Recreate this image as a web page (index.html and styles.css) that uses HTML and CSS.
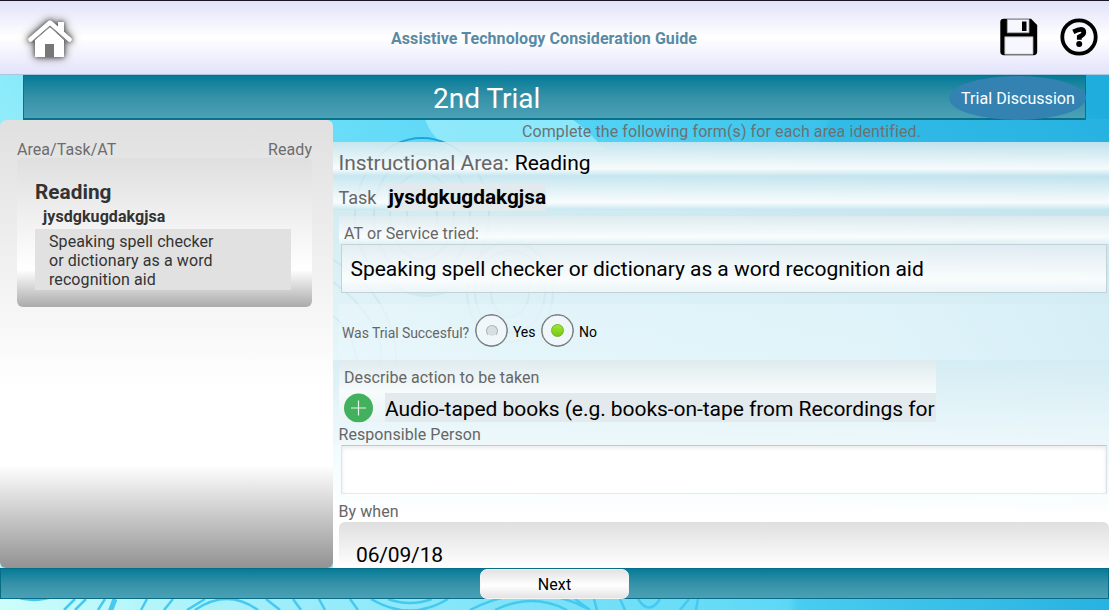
FILE: index.html
```html
<!DOCTYPE html>
<html lang="en">
<head>
<meta charset="utf-8">
<title>Assistive Technology Consideration Guide</title>
<link rel="stylesheet" href="styles.css">
</head>
<body>
<div class="app">
  <svg class="backdrop" viewBox="0 0 1109 610" aria-hidden="true">
    <defs>
      <linearGradient id="sky" x1="0" y1="0.6" x2="1" y2="0.2">
        <stop offset="0" stop-color="#a9f5fb"/><stop offset=".3" stop-color="#74e2fa"/>
        <stop offset=".62" stop-color="#4fd1f4"/><stop offset="1" stop-color="#1fadde"/>
      </linearGradient>
      <linearGradient id="floor" x1="0" x2="1">
        <stop offset="0" stop-color="#ccfdfa"/><stop offset=".3" stop-color="#96ebfa"/>
        <stop offset=".71" stop-color="#5cd8f6"/><stop offset=".72" stop-color="#48ccf0"/><stop offset="1" stop-color="#28b2e1"/>
      </linearGradient>
    </defs>
    <rect width="1109" height="610" fill="url(#sky)"/>
    <path d="M425 119 Q430 136 450 150H605Q590 132 572 119Z" fill="#9aecfb" opacity=".8"/>
    <path d="M830 119L815 150H1109V119Z" fill="#2db7e4" opacity=".55"/>
    <rect y="595" width="1109" height="15" fill="url(#floor)"/>
    <g class="ripples">
      <ellipse cx="422" cy="216" rx="67" ry="78"/>
      <ellipse cx="422" cy="216" rx="48" ry="62"/>
      <ellipse cx="422" cy="216" rx="32" ry="43"/>
      <ellipse cx="422" cy="216" rx="15" ry="25"/>
      <ellipse cx="510" cy="292" rx="43" ry="50"/>
      <ellipse cx="510" cy="292" rx="35" ry="41"/>
      <ellipse cx="510" cy="292" rx="19" ry="25"/>
      <path d="M333 260Q365 278 380 304Q400 335 396 380M333 282Q358 300 370 320Q390 350 375 390M333 316Q352 330 357 360M395 285Q420 304 450 290"/>
    </g>
    <g class="ripples low">
      <ellipse cx="33" cy="548" rx="52" ry="52"/>
      <path d="M75 599L64 610M86 599L75 610M105 599L98 610M147 599L141 610M173 599L164 610M195 610Q227 588 258 610M205 599L187 610M266 599L280 610M293 599L301 610M319 599L325 610M350 599L358 610M371 599Q410 622 448 599M388 599Q410 607 432 599M470 610Q532 578 590 610M495 610Q532 592 567 610M575 599L590 610M594 599L597 610M620 599L625 610M638 599Q649 616 660 599M680 610L689 599M696 610L698 599"/>
      <path d="M115 599L110 612" stroke-width="5"/>
    </g>
  </svg>

  <header class="topbar">
    <svg class="home" width="58" height="58" viewBox="0 0 58 58" role="img" aria-label="Home">
      <g fill="#fff">
        <path d="M37 14H43V24L37 20Z"/>
        <path d="M14 32L29 19L43 32V49H33V36H24V49H14Z"/>
        <path class="doorway" d="M24 36H33V49H24Z"/>
        <path d="M9.5 31.5L29 14.5L48.500 31.5" fill="none" stroke="#fff" stroke-width="4.500" stroke-linecap="round" stroke-linejoin="round"/>
        <path d="M13 32.500L29 18.500L45 32.500" fill="none" stroke="#999" stroke-width="1"/>
      </g>
    </svg>
    <h1 class="app-title">Assistive Technology Consideration Guide</h1>
    <div class="tools">
      <svg width="38" height="38" viewBox="0 0 38 38" role="img" aria-label="Save">
        <path d="M4 .7H31L37.2 7V33.5Q37.2 37.3 33.5 37.3H4Q.3 37.3 .3 33.5V4Q.3 .7 4 .7Z"/>
        <path d="M7.3 1.5H29V14.8H7.3ZM4.8 18.8H33V36.2H4.8Z" fill="#f7f7ff" stroke="#aaa" stroke-width=".8"/>
        <rect x="22" y="3.5" width="4.5" height="9.5"/>
      </svg>
      <svg width="38" height="38" viewBox="0 0 38 38" role="img" aria-label="Help">
        <circle cx="19" cy="19" r="16.7" fill="none" stroke="#000" stroke-width="3.8"/>
        <path d="M13.3 13.8Q23.8 8.8 23.8 14.5Q23.8 16.7 19.3 19V21.8" fill="none" stroke="#000" stroke-width="4.8"/>
        <circle cx="19.2" cy="25.9" r="3"/>
      </svg>
    </div>
  </header>

  <div class="trial-bar">
    <h2>2nd Trial</h2>
    <button class="discussion">Trial Discussion</button>
  </div>

  <div class="content">
    <aside class="summary">
      <div class="summary-head"><span>Area/Task/AT</span><span>Ready</span></div>
      <section class="area-card">
        <h3>Reading</h3>
        <h4>jysdgkugdakgjsa</h4>
        <p>Speaking spell checker<br>or dictionary as a word<br>recognition aid</p>
      </section>
    </aside>

    <main class="details">
      <p class="hint">Complete the following form(s) for each area identified.</p>
      <form class="form">
        <div class="row area"><span>Instructional Area:</span><span class="value">Reading</span></div>
        <div class="row task"><span>Task</span><strong>jysdgkugdakgjsa</strong></div>
        <div class="tried"><label>AT or Service tried:</label></div>
        <div class="field glass">Speaking spell checker or dictionary as a word recognition aid</div>
        <div class="success">
          <span class="question">Was Trial Succesful?</span>
          <span class="radio"><i></i></span><span class="option yes">Yes</span>
          <span class="radio on"><i></i></span><span class="option">No</span>
        </div>
        <div class="action">
          <div class="action-box">
            <label>Describe action to be taken</label>
            <div class="action-item">
              <svg width="30" height="30" viewBox="0 0 30 30" role="img" aria-label="Add">
                <circle cx="14.500" cy="15" r="14.5" fill="#42b05c"/>
                <path d="M14.500 7.5V22.5M7 15H22" stroke="#e4f5e8" stroke-width="1.2"/>
              </svg>
              <span>Audio-taped books (e.g. books-on-tape from Recordings for</span>
            </div>
          </div>
        </div>
        <label class="plain person">Responsible Person</label>
        <div class="field blank"></div>
        <label class="plain when">By when</label>
        <div class="date">06/09/18</div>
      </form>
    </main>
  </div>

  <footer class="bottom-bar"><button class="next">Next</button></footer>
</div>
</body>
</html>
```
FILE: styles.css
```css
* { box-sizing: border-box; }
body { margin: 0; font-family: Roboto, sans-serif; color: #000; overflow: hidden; }
h1, h2, h3, h4, p { margin: 0; }
button { font: inherit; border: 0; padding: 0; }
svg { display: block; flex: none; }

.app { width: 1109px; height: 610px; position: relative; display: flex; flex-direction: column; }
.backdrop { position: absolute; inset: 0; z-index: -1; width: 1109px; height: 610px; }
.ripples { fill: none; stroke: #1ba5d8; stroke-width: 2; }
.ripples.low { stroke: #45c9f0; stroke-width: 2.5; }

.topbar {
  height: 75px; flex: none; display: grid; grid-template-columns: 200px 1fr 200px; align-items: center;
  border-top: 1px solid #1a1824; border-bottom: 1px solid #a9c8dc;
  background: linear-gradient(#e2e2fb, #fff 50%, #e3e3fc);
}
.home { margin-left: 21px; margin-top: -1px; filter: drop-shadow(0 0 2px #555) drop-shadow(0 0 4px #666); }
.doorway { fill: #777; }
.app-title { font-size: 16px; letter-spacing: .07px; font-weight: 700; line-height: 20px; color: #588aa5; text-align: center; padding-right: 21px; padding-top: 2px; white-space: nowrap; }
.tools { display: flex; gap: 22px; justify-content: flex-end; padding: 0 11px 1px 0; }

.trial-bar {
  height: 45px; flex: none; margin: 0 23px; width: 1063px; display: grid; grid-template-columns: 1fr 136px; align-items: center;
  border: 1px solid #0a7189; border-bottom-width: 2px; background: linear-gradient(#067b98, #3591a8 50%, #4ba1b6);
}
.trial-bar h2 { font-size: 28px; font-weight: 400; line-height: 36px; color: #fff; padding: 1px 0 0 409px; }
.discussion { height: 44px; border-radius: 50%; background: #3482b2; color: #fff; font-size: 16px; width: 137px; letter-spacing: .05px; padding-left: 1px; }

.content { height: 448px; flex: none; display: grid; grid-template-columns: 333px 1fr; }

.summary { border-radius: 6px; padding: 20px 20px 0 17px; background: linear-gradient(#e0e0e0, #fff 60%, #fff 77%, #929292); }
.summary-head { height: 18px; display: flex; justify-content: space-between; font-size: 16px; line-height: 19px; color: #6d6d6d; padding-right: 1px; letter-spacing: .05px; }
.area-card {
  height: 149px; width: 295px; border-radius: 6px; padding: 22px 21px 0 18px; color: #333;
  background: linear-gradient(#dfdfdf, #fff 75%, #aaa);
}
.area-card h3 { font-size: 20.8px; line-height: 24px; height: 26px; }
.area-card h4 { font-size: 16px; letter-spacing: .08px; line-height: 21px; height: 23px; padding-left: 8px; }
.area-card p { background: #e1e1e1; height: 61px; padding: 3px 14px 0; font-size: 16px; letter-spacing: .08px; line-height: 19px; }

.details { min-width: 0; overflow: hidden; }
.hint { height: 22px; line-height: 23px; font-size: 16px; letter-spacing: .09px; color: #6c7174; padding-left: 189px; white-space: nowrap; }
.form { height: 426px; display: flex; flex-direction: column; background: linear-gradient(rgba(226,234,237,.8), rgba(255,255,255,.9) 75%, #fff 88%); color: #666; white-space: nowrap; }
.row { flex: none; display: flex; align-items: center; padding-left: 5.5px; background: linear-gradient(rgba(193,228,238,.4), rgba(255,255,255,.85) 78%, rgba(194,230,239,.65)); }
.area { height: 34px; font-size: 21px; padding-top: 8px; }
.area .value { color: #000; padding-left: 6px; }
.task { height: 34px; font-size: 18px; padding-top: 8px; }
.task strong { color: #000; background: #e3eaee; font-size: 20.8px; line-height: 27px; margin-left: 12px; }
.tried { flex: none; margin: 6px 0 0 6px; height: 28px; padding-left: 5px; font-size: 16px; letter-spacing: .1px; line-height: 35px; background: linear-gradient(#e2ebeebb, #ffffffdd 75%, #e4f1f5cc); }
.field { flex: none; height: 49px; margin: 0 2px 0 8px; border: 1px solid #c2d3d8; }
.glass { color: #000; font-size: 21px; letter-spacing: -.03px; line-height: 48px; padding-left: 8.5px; background: linear-gradient(#e8eef1aa, #ffffffdd 72%, #f0f6f9cc); }
.success { flex: none; height: 56px; margin: 11px 0 0 6px; padding-left: 3px; display: flex; align-items: center; background: linear-gradient(100deg, #eaf7fb88, #e0f4facc 70%, #d6eef7cc); font-size: 14px; color: #000; }
.question { color: #666; padding-top: 1px; width: 133px; letter-spacing: -.08px; }
.radio { width: 33px; height: 33px; border: 1.5px solid #6c7276; border-radius: 50%; display: flex; align-items: center; justify-content: center; margin-top: -3px; background: #eff7fa; box-shadow: inset 0 0 0 .5px #6c7276; }
.radio i { width: 12px; height: 12px; border-radius: 50%; background: #d9dee0; border: 1px solid #aeb4b6; border-bottom-color: #f4f8f9; }
.radio.on i { width: 13px; height: 13px; background: linear-gradient(#9be82f, #78c815); border-color: #75af33; }
.option { padding: 0 0 0 5px; letter-spacing: -.1px; }
.yes { width: 33px; }
.action { flex: none; height: 62px; padding-left: 6px; background: linear-gradient(#cce8f088, #e6f4f888); }
.action-box { width: 597px; height: 62px; background: linear-gradient(#e1eaedcc, #fafcfcdd 50%, #eaf3f6dd); }
.action-box label { display: block; height: 33px; line-height: 35px; font-size: 16px; letter-spacing: .08px; padding-left: 5px; }
.action-item { height: 29px; display: flex; align-items: center; padding-left: 5px; }
.action-item span { margin-left: 11px; width: 551px; height: 29px; background: #e3eaed; color: #000; font-size: 21px; letter-spacing: -.05px; line-height: 32px; overflow: hidden; }
.plain { flex: none; padding-left: 5.5px; font-size: 16px; letter-spacing: .07px; }
.person { height: 23px; line-height: 25px; background: linear-gradient(#e6f4f899, #eef6f999); }
.blank { background: #fff; border-color: #c2c9cc #dbe1e3 #e8ebec #dee3e5; box-shadow: inset 0 2px 4px #e9e9e9; }
.when { height: 28px; line-height: 36px; }
.date { flex: none; height: 46px; margin-left: 6px; border-radius: 6px 6px 0 0; background: linear-gradient(#dfdfdf, #fff); color: #000; font-size: 21px; letter-spacing: -.15px; line-height: 66px; padding-left: 17px; }

.bottom-bar { height: 31px; flex: none; border: 1px solid #076d86; background: linear-gradient(#067b98, #3591a8 50%, #4ba1b6); display: flex; padding-left: 479px; }
.next { width: 149px; height: 30px; border-radius: 7px; background: linear-gradient(#e3e3e3, #fff 55%, #e3e3e3); font-size: 16px; letter-spacing: .1px; color: #000; border: 1px solid #f5f5f5; }
```
